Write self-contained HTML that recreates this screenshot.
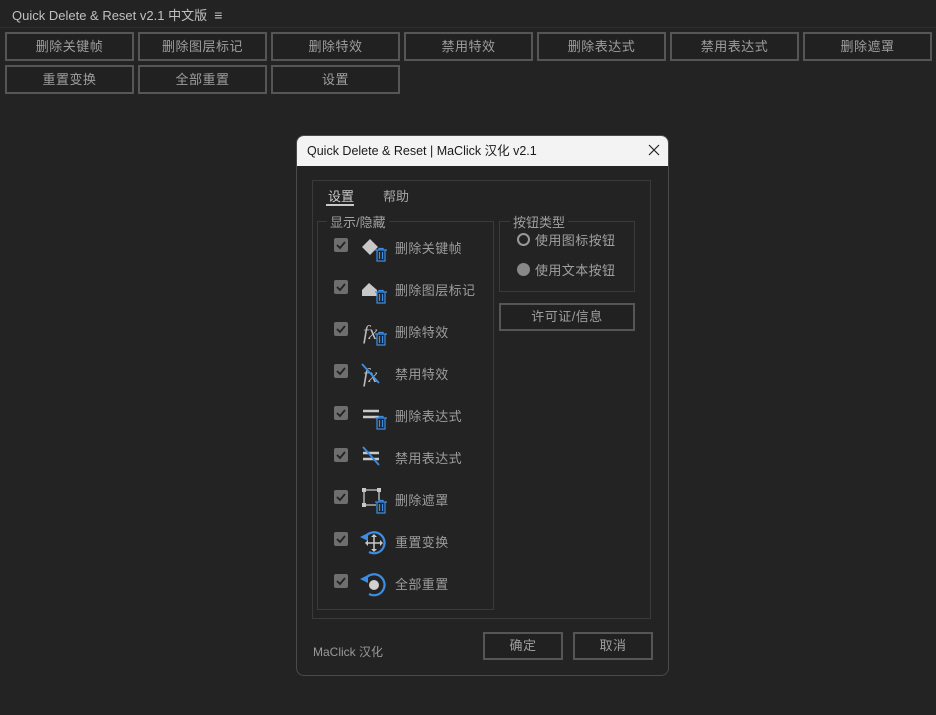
<!DOCTYPE html>
<html><head><meta charset="utf-8"><style>
*{margin:0;padding:0;box-sizing:border-box}
body{width:936px;height:715px;background:#232323;font-family:"Liberation Sans","Noto Sans CJK SC",sans-serif;color:#a8a8a8;position:relative;overflow:hidden;font-size:13px}
.a{position:absolute}
.btn{position:absolute;height:29px;width:129px;border:2px solid #565656;background:#212121;color:#9e9e9e;text-align:center;line-height:25px;font-size:13px;letter-spacing:0.5px}
.cb{position:absolute;left:334px;width:14px;height:14px;background:#6e6e6e;border-radius:2px}
.cb svg{position:absolute;left:2px;top:2px}
.lbl{position:absolute;left:395px;font-size:13px;color:#9c9c9c;letter-spacing:0.4px}
.ic{position:absolute;left:360px}
</style></head><body>
<div class="a" style="left:12px;top:5px;font-size:13px;color:#c0c0c0">Quick Delete &amp; Reset v2.1 中文版 &nbsp;<span style="font-size:14px">≡</span></div>
<div class="a" style="left:0;top:27px;width:936px;height:1px;background:#2d2d2d"></div>
<div class="btn" style="left:5px;top:32px">删除关键帧</div>
<div class="btn" style="left:138px;top:32px">删除图层标记</div>
<div class="btn" style="left:271px;top:32px">删除特效</div>
<div class="btn" style="left:404px;top:32px">禁用特效</div>
<div class="btn" style="left:537px;top:32px">删除表达式</div>
<div class="btn" style="left:670px;top:32px">禁用表达式</div>
<div class="btn" style="left:803px;top:32px">删除遮罩</div>
<div class="btn" style="left:5px;top:65px">重置变换</div>
<div class="btn" style="left:138px;top:65px">全部重置</div>
<div class="btn" style="left:271px;top:65px">设置</div>

<div class="a" style="left:296px;top:135px;width:373px;height:541px;background:#232323;border:1px solid #4a4a4a;border-radius:8px;overflow:hidden">
 <div class="a" style="left:0;top:0;width:373px;height:30px;background:#f3f3f3;color:#1a1a1a;font-size:12.5px;line-height:30px;padding-left:10px">Quick Delete &amp; Reset | MaClick 汉化 v2.1
  <svg class="a" style="left:351px;top:8px" width="12" height="12" viewBox="0 0 12 12"><path d="M1 1L11 11M11 1L1 11" stroke="#222" stroke-width="1.2"/></svg></div>
</div>
<div class="a" style="left:312px;top:180px;width:339px;height:439px;border:1px solid #3a3a3a"></div>
<div class="a" style="left:328px;top:186px;color:#c8c8c8">设置</div>
<div class="a" style="left:326px;top:204px;width:28px;height:2px;background:#c8c8c8"></div>
<div class="a" style="left:383px;top:186px;color:#a8a8a8">帮助</div>
<div class="a" style="left:317px;top:221px;width:177px;height:389px;border:1px solid #3a3a3a"></div>
<div class="a" style="left:327px;top:212px;background:#232323;padding:0 3px;color:#a0a0a0">显示/隐藏</div>
<div class="a" style="left:499px;top:221px;width:136px;height:71px;border:1px solid #3a3a3a"></div>
<div class="a" style="left:510px;top:212px;background:#232323;padding:0 3px;color:#a0a0a0">按钮类型</div>
<div class="a" style="left:517px;top:233px;width:13px;height:13px;border:2px solid #999;border-radius:50%"></div>
<div class="a" style="left:535px;top:230px;color:#a0a0a0;letter-spacing:0.4px">使用图标按钮</div>
<div class="a" style="left:517px;top:263px;width:13px;height:13px;background:#888;border-radius:50%"></div>
<div class="a" style="left:535px;top:260px;color:#a0a0a0;letter-spacing:0.4px">使用文本按钮</div>
<div class="btn" style="left:499px;top:303px;width:136px;height:28px;line-height:24px">许可证/信息</div>

<div class="cb" style="top:238px"><svg width="10" height="10"><path d="M1 5L4 8L9 2" stroke="#222" stroke-width="1.8" fill="none"/></svg></div>
<div class="cb" style="top:280px"><svg width="10" height="10"><path d="M1 5L4 8L9 2" stroke="#222" stroke-width="1.8" fill="none"/></svg></div>
<div class="cb" style="top:322px"><svg width="10" height="10"><path d="M1 5L4 8L9 2" stroke="#222" stroke-width="1.8" fill="none"/></svg></div>
<div class="cb" style="top:364px"><svg width="10" height="10"><path d="M1 5L4 8L9 2" stroke="#222" stroke-width="1.8" fill="none"/></svg></div>
<div class="cb" style="top:406px"><svg width="10" height="10"><path d="M1 5L4 8L9 2" stroke="#222" stroke-width="1.8" fill="none"/></svg></div>
<div class="cb" style="top:448px"><svg width="10" height="10"><path d="M1 5L4 8L9 2" stroke="#222" stroke-width="1.8" fill="none"/></svg></div>
<div class="cb" style="top:490px"><svg width="10" height="10"><path d="M1 5L4 8L9 2" stroke="#222" stroke-width="1.8" fill="none"/></svg></div>
<div class="cb" style="top:532px"><svg width="10" height="10"><path d="M1 5L4 8L9 2" stroke="#222" stroke-width="1.8" fill="none"/></svg></div>
<div class="cb" style="top:574px"><svg width="10" height="10"><path d="M1 5L4 8L9 2" stroke="#222" stroke-width="1.8" fill="none"/></svg></div>

<svg class="ic" style="top:234px" width="30" height="30"><path d="M2 13L10 5L18 13L10 21Z" fill="#c8c8c8"/><g stroke="#3a8ee6" fill="none" stroke-width="1.2"><path d="M15 16h12M17 16v11h8v-11M19.5 18v7M22.5 18v7M19 16v-1.5h4v1.5"/></g></svg>
<svg class="ic" style="top:276px" width="30" height="30"><path d="M2 14L9 7L17 14V20H2Z" fill="#c8c8c8"/><g stroke="#3a8ee6" fill="none" stroke-width="1.2"><path d="M15 16h12M17 16v11h8v-11M19.5 18v7M22.5 18v7M19 16v-1.5h4v1.5"/></g></svg>
<svg class="ic" style="top:318px" width="30" height="30"><text x="3" y="21" font-family="Liberation Serif" font-style="italic" font-size="20" fill="#bbb">fx</text><g stroke="#3a8ee6" fill="none" stroke-width="1.2"><path d="M15 16h12M17 16v11h8v-11M19.5 18v7M22.5 18v7M19 16v-1.5h4v1.5"/></g></svg>
<svg class="ic" style="top:360px" width="30" height="30"><text x="3" y="22" font-family="Liberation Serif" font-style="italic" font-size="20" fill="#bbb">fx</text><path d="M2 4L19 23" stroke="#3a8ee6" stroke-width="1.8"/></svg>
<svg class="ic" style="top:402px" width="30" height="30"><path d="M3 9h16M3 15h16" stroke="#c8c8c8" stroke-width="2.6"/><g stroke="#3a8ee6" fill="none" stroke-width="1.2"><path d="M15 16h12M17 16v11h8v-11M19.5 18v7M22.5 18v7M19 16v-1.5h4v1.5"/></g></svg>
<svg class="ic" style="top:444px" width="30" height="30"><path d="M3 9h16M3 15h16" stroke="#c8c8c8" stroke-width="2.6"/><path d="M3 3L19 21" stroke="#3a8ee6" stroke-width="1.8"/></svg>
<svg class="ic" style="top:486px" width="30" height="30"><path d="M4 4h15M4 4v15M4 19h12M19 4v11" stroke="#c8c8c8" stroke-width="1.3" fill="none"/><rect x="2" y="2" width="4" height="4" fill="#c8c8c8"/><rect x="17" y="2" width="4" height="4" fill="#c8c8c8"/><rect x="2" y="17" width="4" height="4" fill="#c8c8c8"/><g stroke="#3a8ee6" fill="none" stroke-width="1.2"><path d="M15 16h12M17 16v11h8v-11M19.5 18v7M22.5 18v7M19 16v-1.5h4v1.5"/></g></svg>
<svg class="ic" style="top:528px" width="30" height="30"><path d="M6 8A10.5 10.5 0 1 1 9 24" stroke="#3a8ee6" stroke-width="2.2" fill="none"/><path d="M0 9L8 5L8 13Z" fill="#3a8ee6"/><path d="M14 8v14M7 15h14" stroke="#c8c8c8" stroke-width="1.5"/><path d="M14 6l-3 3h6zM14 24l-3-3h6zM5 15l3-3v6zM23 15l-3-3v6z" fill="#c8c8c8"/></svg>
<svg class="ic" style="top:570px" width="30" height="30"><path d="M6 8A10.5 10.5 0 1 1 9 24" stroke="#3a8ee6" stroke-width="2.2" fill="none"/><path d="M0 9L8 5L8 13Z" fill="#3a8ee6"/><circle cx="14" cy="15" r="5" fill="#d0d0d0"/></svg>

<div class="lbl" style="top:238px">删除关键帧</div>
<div class="lbl" style="top:280px">删除图层标记</div>
<div class="lbl" style="top:322px">删除特效</div>
<div class="lbl" style="top:364px">禁用特效</div>
<div class="lbl" style="top:406px">删除表达式</div>
<div class="lbl" style="top:448px">禁用表达式</div>
<div class="lbl" style="top:490px">删除遮罩</div>
<div class="lbl" style="top:532px">重置变换</div>
<div class="lbl" style="top:574px">全部重置</div>

<div class="a" style="left:313px;top:643px;font-size:12px;color:#9a9a9a">MaClick 汉化</div>
<div class="btn" style="left:483px;top:632px;width:80px;height:28px;line-height:24px">确定</div>
<div class="btn" style="left:573px;top:632px;width:80px;height:28px;line-height:24px">取消</div>
</body></html>
